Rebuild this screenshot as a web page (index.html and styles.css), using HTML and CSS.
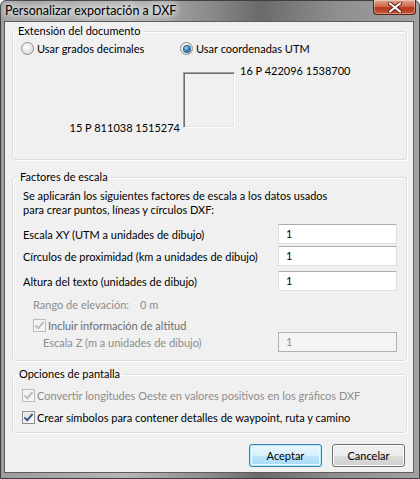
FILE: index.html
```html
<!DOCTYPE html>
<html lang="es">
<head>
    <meta charset="UTF-8">
    <meta name="viewport" content="width=device-width, initial-scale=1.0">
    <title>Personalizar exportación a DXF</title>
    <link rel="stylesheet" href="styles.css">
</head>
<body>
    <div class="window">
        <!-- Title bar -->
        <div class="titlebar">
            <span class="title">Personalizar exportación a DXF</span>
            <span class="close">
                <svg width="14" height="11" viewBox="0 0 14 11">
                    <path d="M2 1.5 L12 9.5 M12 1.5 L2 9.5" stroke="#5a1d14" stroke-width="4" stroke-linecap="round"/>
                    <path d="M2 1.5 L12 9.5 M12 1.5 L2 9.5" stroke="#fff" stroke-width="2.2" stroke-linecap="round"/>
                </svg>
            </span>
        </div>

        <div class="client">
            <!-- Document extent -->
            <fieldset class="group group-extent">
                <legend>Extensión del documento</legend>
                <div class="radio-row">
                    <label class="opt opt-first"><span class="radio"></span>Usar grados decimales</label>
                    <label class="opt"><span class="radio on"></span>Usar coordenadas UTM</label>
                </div>
                <div class="extent">
                    <span class="coord coord-sw">15 P 811038 1515274</span>
                    <span class="extent-box"></span>
                    <span class="coord coord-ne">16 P 422096 1538700</span>
                </div>
            </fieldset>

            <!-- Scale factors -->
            <fieldset class="group group-scale">
                <legend>Factores de escala</legend>
                <p class="desc">Se aplicarán los siguientes factores de escala a los datos usados<br>para crear puntos, líneas y círculos DXF:</p>
                <div class="field field-xy">
                    <span>Escala XY (UTM a unidades de dibujo)</span>
                    <span class="input">1</span>
                </div>
                <div class="field field-circle">
                    <span>Círculos de proximidad (km a unidades de dibujo)</span>
                    <span class="input">1</span>
                </div>
                <div class="field field-text">
                    <span>Altura del texto (unidades de dibujo)</span>
                    <span class="input">1</span>
                </div>
                <div class="range disabled">
                    <span class="range-label">Rango de elevación:</span>
                    <span>0 m</span>
                </div>
                <label class="check-row check-alt disabled"><span class="check on"></span>Incluir información de altitud</label>
                <div class="field field-z disabled">
                    <span class="z-label">Escala Z (m a unidades de dibujo)</span>
                    <span class="input">1</span>
                </div>
            </fieldset>

            <!-- Display options -->
            <fieldset class="group group-display">
                <legend>Opciones de pantalla</legend>
                <label class="check-row disabled"><span class="check on"></span>Convertir longitudes Oeste en valores positivos en los gráficos DXF</label>
                <label class="check-row check-symbols"><span class="check on"></span>Crear símbolos para contener detalles de waypoint, ruta y camino</label>
            </fieldset>

            <div class="buttons">
                <button class="btn btn-default">Aceptar</button>
                <button class="btn">Cancelar</button>
            </div>
        </div>
    </div>
</body>
</html>
```
FILE: styles.css
```css
body {
    margin: 0;
    padding: 0;
    font-family: Lato, "Liberation Sans", sans-serif;
    font-size: 11px;
    color: #000;
    background: #fff;
}

/* Window frame */
.window {
    box-sizing: border-box;
    width: 420px;
    height: 479px;
    padding: 0 5px 5px 3px;
    border: 1px solid #3f3f3f;
    border-radius: 6px 6px 0 0;
    background: linear-gradient(to right, #9c9c9c 0%, #b6b6b6 30%, #8a8a8a 50%, #6a6a6a 62%, #8e8e8e 80%, #a2a2a2 100%);
    display: flex;
    flex-direction: column;
}

.titlebar {
    height: 20px;
    display: flex;
    justify-content: space-between;
    align-items: flex-start;
}

.title {
    font-size: 12.5px;
    line-height: 20px;
    padding-left: 1px;
    color: #000;
    text-shadow: 0 0 6px #fff, 0 0 10px #fff, 0 0 14px #fff;
}

.close {
    width: 41px;
    height: 14px;
    margin-top: -1px;
    margin-right: -2px;
    border: 1px solid #5a2018;
    border-top: none;
    border-radius: 0 0 4px 4px;
    background: linear-gradient(#e0a591 0%, #d26a4f 45%, #b5381c 55%, #c7593a 100%);
    box-shadow: inset 0 0 0 1px rgba(255, 255, 255, 0.35);
    display: flex;
    justify-content: center;
    align-items: center;
}

/* Client area */
.client {
    flex: 1;
    background: #f0f0f0;
    border: 1px solid #5d5d5d;
    padding: 1px 6px 0 7px;
    display: flex;
    flex-direction: column;
}

.group {
    margin: 0;
    border: 1px solid #d5dfe5;
    border-radius: 3px;
    box-shadow: inset 1px 1px 0 #fff, 1px 1px 0 #fff;
    min-width: 0;
}

.group legend {
    padding: 0 3px;
    margin-left: -6px;
    line-height: 16px;
}

.disabled {
    color: #8d8d8d;
}

/* Extent group */
.group-extent {
    padding: 2px 8px 24px 8px;
}

.radio-row {
    display: flex;
    align-items: center;
    height: 15px;
}

.opt {
    display: flex;
    align-items: center;
}

.opt-first {
    width: 159px;
}

.radio {
    box-sizing: border-box;
    width: 13px;
    height: 13px;
    margin-right: 3px;
    border: 1px solid #8f8f8f;
    border-radius: 50%;
    background: radial-gradient(circle at 40% 35%, #fefefe 0%, #e6e6e6 55%, #cfcfcf 100%);
    display: flex;
    justify-content: center;
    align-items: center;
}

.radio.on::after {
    content: "";
    width: 6px;
    height: 6px;
    border-radius: 50%;
    background: radial-gradient(circle at 40% 35%, #9ae0fb 0%, #2a83c2 45%, #123d68 100%);
    box-shadow: 0 0 0 1px #355d80;
}

.extent {
    display: flex;
    margin-top: 8px;
    line-height: 14px;
}

.coord-sw {
    width: 159px;
    text-align: right;
    align-self: flex-end;
    margin-right: 3px;
}

.extent-box {
    box-sizing: border-box;
    width: 52px;
    height: 56px;
    margin: 8px 0 7px;
    border: 1px solid;
    border-color: #a0a0a0 #fff #fff #a0a0a0;
    box-shadow: inset 1px 1px 0 #6d6d6d, inset -1px -1px 0 #e3e3e3;
}

.coord-ne {
    align-self: flex-start;
    margin-left: 5px;
}

/* Scale group */
.group-scale {
    margin-top: 9px;
    padding: 4px 9px 8px 10px;
}

.desc {
    margin: 0;
    line-height: 14px;
}

.field {
    display: flex;
    justify-content: space-between;
    align-items: center;
    height: 20px;
}

.field-xy { margin-top: 7px; }
.field-circle { margin-top: 2px; }
.field-text { margin-top: 5px; }

.input {
    box-sizing: border-box;
    width: 119px;
    height: 20px;
    padding-left: 7px;
    line-height: 18px;
    background: #fff;
    border: 1px solid #dbdfe6;
    border-top-color: #abadb3;
    color: #000;
}

.field-z .input {
    background: #f4f4f4;
    border-color: #adb2b5;
    color: #8d8d8d;
}

.range {
    margin-top: 7px;
    padding-left: 10px;
    line-height: 14px;
    display: flex;
}

.range-label {
    width: 107px;
}

.check-row {
    display: flex;
    align-items: center;
    height: 13px;
}

.check-alt {
    margin-top: 7px;
    padding-left: 10px;
    color: #6d6d6d;
}

.z-label {
    padding-left: 20px;
}

.check {
    box-sizing: border-box;
    width: 13px;
    height: 13px;
    margin-right: 2px;
    border: 1px solid #8e8f8f;
    background: linear-gradient(135deg, #dcdcdc 0%, #f4f4f4 60%, #fff 100%);
    box-shadow: inset 0 0 0 1px #f4f4f4;
    display: flex;
    justify-content: center;
    align-items: center;
}

.check.on::after {
    content: "";
    width: 3px;
    height: 7px;
    margin-top: -2px;
    border: solid #3c5b8f;
    border-width: 0 2px 2px 0;
    transform: rotate(40deg);
}

.disabled .check {
    border-color: #bcbcbc;
    background: #f4f4f4;
}

.disabled .check.on::after {
    border-color: #bdbdbd;
}

/* Display group */
.group-display {
    margin-top: 5px;
    padding: 7px 9px 8px 9px;
}

.check-symbols {
    margin-top: 9px;
}

/* Buttons */
.buttons {
    display: flex;
    justify-content: flex-end;
    gap: 10px;
    margin-top: 11px;
    padding-right: 2px;
}

.btn {
    box-sizing: border-box;
    width: 73px;
    height: 23px;
    padding: 0;
    font: inherit;
    color: #000;
    border: 1px solid #707070;
    border-radius: 3px;
    background: linear-gradient(#f2f2f2 0%, #ebebeb 50%, #dddddd 51%, #cfcfcf 100%);
    box-shadow: inset 0 0 0 1px #fcfcfc;
}

.btn-default {
    border-color: #3c7fb1;
    background: linear-gradient(#eaf6fd 0%, #d9f0fc 50%, #bee6fd 51%, #a7d9f5 100%);
    box-shadow: inset 0 0 0 1px #48d2ff55, inset 0 0 0 2px #e8f6fd;
}
```
